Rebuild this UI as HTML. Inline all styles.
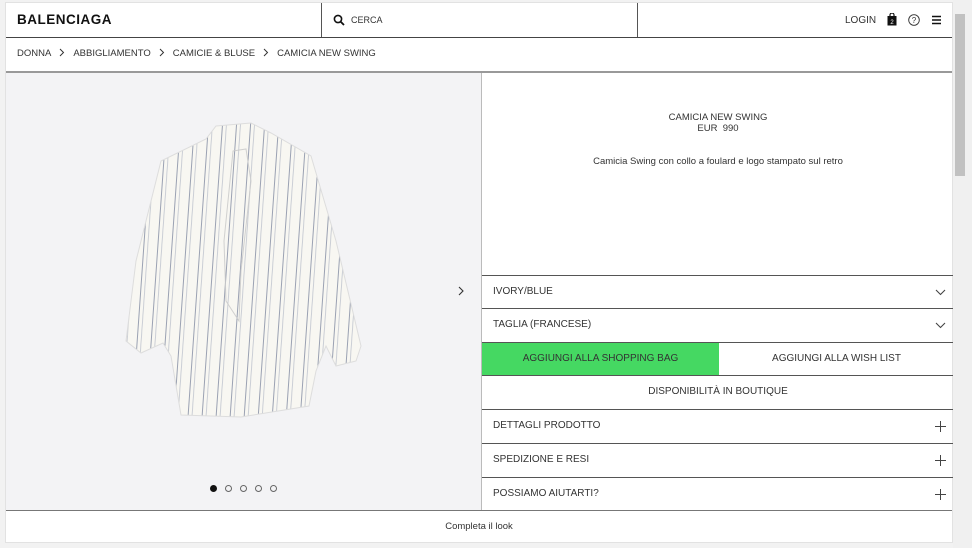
<!DOCTYPE html>
<html><head><meta charset="utf-8"><style>
*{margin:0;padding:0;box-sizing:border-box}
body{width:972px;height:548px;background:#f2f2f2;font-family:"Liberation Sans",Arial,sans-serif;color:#222;position:relative;overflow:hidden}
.page{position:absolute;left:5px;top:2px;width:948px;height:541px;background:#fff;border:1px solid #e2e2e2}
.abs{position:absolute}
.t{font-size:10px;color:#333}
.row{position:absolute;left:476px;width:472px;height:34px;border-top:1px solid #555;font-size:10px;color:#333;padding-left:11px;line-height:32px}
.ic{position:absolute;right:8px}
.bc svg{vertical-align:-1px}
.sb{position:absolute;left:953px;top:0;width:19px;height:548px;background:#f0f0f0}
</style></head><body>
<div class="page">
 <div class="abs" style="left:11px;top:9px;font-weight:bold;font-size:13.5px;letter-spacing:0.5px;color:#111">BALENCIAGA</div>
 <div class="abs" style="left:315px;top:0;width:1px;height:34px;background:#555"></div>
 <div class="abs" style="left:631px;top:0;width:1px;height:34px;background:#555"></div>
 <svg class="abs" style="left:327px;top:11px" width="12" height="12" viewBox="0 0 12 12"><circle cx="5" cy="5" r="3.6" fill="none" stroke="#111" stroke-width="1.6"/><path d="M7.6 7.6L11 11" stroke="#111" stroke-width="1.8"/></svg>
 <div class="abs t" style="left:345px;top:12px;font-size:9px">CERCA</div>
 <div class="abs t" style="left:839px;top:12px;font-size:10px">LOGIN</div>
 <svg class="abs" style="left:881px;top:10px" width="10" height="13" viewBox="0 0 10 13"><path d="M3 3V2a2 2 0 0 1 4 0v1" fill="none" stroke="#111" stroke-width="1.2"/><rect x="0.5" y="3" width="9" height="9.5" fill="#111"/><text x="5" y="11" font-size="6" fill="#fff" text-anchor="middle" font-family="Liberation Sans">2</text></svg>
 <svg class="abs" style="left:902px;top:11px" width="12" height="12" viewBox="0 0 12 12"><circle cx="6" cy="6" r="5.3" fill="none" stroke="#333" stroke-width="0.9"/><text x="6" y="9" font-size="8" fill="#333" text-anchor="middle" font-family="Liberation Sans">?</text></svg>
 <svg class="abs" style="left:926px;top:12px" width="10" height="10" viewBox="0 0 10 10"><path d="M0 1.5h9M0 5h9M0 8.5h9" stroke="#111" stroke-width="1.5"/></svg>
 <div class="abs" style="left:0;top:34px;width:946px;height:1px;background:#444"></div>
 <div class="abs t bc" style="left:11px;top:45px;font-size:9.5px;color:#333;white-space:nowrap">DONNA<svg width="22" height="9" viewBox="0 0 22 9"><path d="M9 1l3.5 3.5L9 8" fill="none" stroke="#333"/></svg>ABBIGLIAMENTO<svg width="22" height="9" viewBox="0 0 22 9"><path d="M9 1l3.5 3.5L9 8" fill="none" stroke="#333"/></svg>CAMICIE &amp; BLUSE<svg width="22" height="9" viewBox="0 0 22 9"><path d="M9 1l3.5 3.5L9 8" fill="none" stroke="#333"/></svg>CAMICIA NEW SWING</div>
 <div class="abs" style="left:0;top:68px;width:946px;height:2px;background:#999"></div>
 <div class="abs" style="left:0;top:70px;width:475px;height:437px;background:#f3f3f5"></div>
 <svg class="abs" style="left:115px;top:118px" width="250" height="300" viewBox="0 0 250 300">
  <defs><pattern id="st" width="14" height="20" patternUnits="userSpaceOnUse" patternTransform="rotate(4)"><rect width="14" height="20" fill="#f8f7f2"/><rect x="3" width="1" height="20" fill="#9aa1b2"/><rect x="7" width="0.8" height="20" fill="#c0c5cf"/></pattern></defs>
  <path d="M95 5L130 2L150 12L190 35L215 120L240 225L235 240L215 245L205 225L195 250L188 285L120 296L60 294L50 235L42 222L20 232L5 220L15 140L40 40L85 18Z" fill="url(#st)" stroke="#ddd"/>
  <path d="M112 30L125 28L130 60L120 150L118 200L105 180L103 120Z" fill="url(#st)" stroke="#ccc" opacity="0.9"/>
 </svg>
 <svg class="abs" style="left:452px;top:283px" width="6" height="10" viewBox="0 0 6 10"><path d="M1 1l4 4-4 4" fill="none" stroke="#333" stroke-width="1.1"/></svg>
 <div class="abs" style="left:204px;top:482px;width:7px;height:7px;border-radius:50%;background:#111"></div>
 <div class="abs" style="left:219px;top:482px;width:7px;height:7px;border-radius:50%;border:1px solid #666"></div>
 <div class="abs" style="left:234px;top:482px;width:7px;height:7px;border-radius:50%;border:1px solid #666"></div>
 <div class="abs" style="left:249px;top:482px;width:7px;height:7px;border-radius:50%;border:1px solid #666"></div>
 <div class="abs" style="left:264px;top:482px;width:7px;height:7px;border-radius:50%;border:1px solid #666"></div>
 <div class="abs" style="left:475px;top:70px;width:1px;height:437px;background:#bbb"></div>
 <div class="abs" style="left:476px;top:109px;width:472px;text-align:center;font-size:9.5px;color:#333;line-height:11px">CAMICIA NEW SWING<br>EUR&nbsp; 990</div>
 <div class="abs" style="left:476px;top:153px;width:472px;text-align:center;font-size:9.5px;color:#333">Camicia Swing con collo a foulard e logo stampato sul retro</div>
 <div class="row" style="top:272px">IVORY/BLUE<svg class="ic" width="11" height="7" viewBox="0 0 11 7" style="top:13px"><path d="M1 1l4.5 4.5L10 1" fill="none" stroke="#444" stroke-width="1.1"/></svg></div>
 <div class="row" style="top:305px">TAGLIA (FRANCESE)<svg class="ic" width="11" height="7" viewBox="0 0 11 7" style="top:13px"><path d="M1 1l4.5 4.5L10 1" fill="none" stroke="#444" stroke-width="1.1"/></svg></div>
 <div class="row" style="top:339px;padding:0">
  <div class="abs" style="left:0;top:0;width:237px;height:33px;background:#45d862;text-align:center">AGGIUNGI ALLA SHOPPING BAG</div>
  <div class="abs" style="left:237px;top:0;width:235px;height:33px;text-align:center">AGGIUNGI ALLA WISH LIST</div>
 </div>
 <div class="row" style="top:372px;padding:0;text-align:center">DISPONIBILITÀ IN BOUTIQUE</div>
 <div class="row" style="top:406px">DETTAGLI PRODOTTO<svg class="ic" width="11" height="11" viewBox="0 0 11 11" style="top:11px"><path d="M5.5 0v11M0 5.5h11" stroke="#444"/></svg></div>
 <div class="row" style="top:440px">SPEDIZIONE E RESI<svg class="ic" width="11" height="11" viewBox="0 0 11 11" style="top:11px"><path d="M5.5 0v11M0 5.5h11" stroke="#444"/></svg></div>
 <div class="row" style="top:474px">POSSIAMO AIUTARTI?<svg class="ic" width="11" height="11" viewBox="0 0 11 11" style="top:11px"><path d="M5.5 0v11M0 5.5h11" stroke="#444"/></svg></div>
 <div class="abs" style="left:0;top:507px;width:946px;height:1px;background:#777"></div>
 <div class="abs" style="left:0;top:518px;width:946px;text-align:center;font-size:9.5px;color:#333">Completa il look</div>
</div>
<div class="sb"><div style="position:absolute;left:2px;top:14px;width:10px;height:162px;background:#c1c1c1"></div></div>
</body></html>
